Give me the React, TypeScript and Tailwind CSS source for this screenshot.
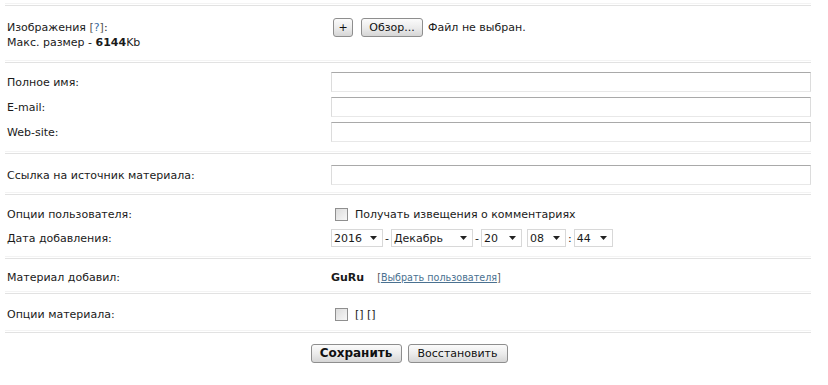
import type { ReactNode } from "react";

const font = { fontFamily: '"DejaVu Sans", Verdana, sans-serif' };

function Line() {
  return (
    <div className="mx-[5px] w-[806px] h-[3px] border-t border-t-[#f3f3f3] border-b border-b-[#e2e2e2]" />
  );
}

function Row({ label, children }: { label: ReactNode; children?: ReactNode }) {
  return (
    <div className="flex items-center h-[20px]">
      <div className="w-[326px] pl-[2px]">{label}</div>
      <div className="flex-1 flex items-center">{children}</div>
    </div>
  );
}

function TextInput() {
  return (
    <div className="w-[480px] h-[20px] bg-white border border-[#dcdcdc] border-t-[#a9a9a9] border-b-[#e8e8e8]" />
  );
}

function Btn({ children, bold, w }: { children: ReactNode; bold?: boolean; w: string }) {
  return (
    <div
      className={`${w} h-[19px] flex items-center justify-center rounded-[3px] border border-[#8e8e8e] bg-gradient-to-b from-[#fbfbfb] via-[#ececec] to-[#d6d6d6] text-[#111] ${bold ? "font-bold text-[12px]" : "text-[11px]"}`}
    >
      {children}
    </div>
  );
}

function Select({ value, w }: { value: string; w: string }) {
  return (
    <div className={`${w} h-[18px] flex items-center justify-between bg-white border border-[#d8d8d8] pl-[2px] pr-[5px]`}>
      <span>{value}</span>
      <svg width="7" height="4" viewBox="0 0 7 4">
        <path d="M0 0h7L3.5 4z" fill="#222" />
      </svg>
    </div>
  );
}

function Check() {
  return (
    <div className="ml-[4px] w-[13px] h-[13px] border border-[#8f8f8f] bg-gradient-to-br from-[#dcdcdc] to-[#f7f7f7]" />
  );
}

export default function App() {
  return (
    <div className="w-[828px] h-[385px] bg-white text-[11px] leading-[15px] text-[#1a1a1a]" style={font}>
      <div className="h-[3px]" />
      <Line />

      <div className="flex pt-[12px] h-[54px]">
        <div className="w-[331px] pl-[7px] pt-[2px]">
          <div>
            Изображения <span className="text-[#555]">[</span>
            <span className="text-[#3a6ea5]">?</span>
            <span className="text-[#555]">]</span>:
          </div>
          <div>
            Макс. размер - <b>6144</b>Kb
          </div>
        </div>
        <div className="flex items-start gap-[8px] pl-[2px]">
          <Btn w="w-[20px]">+</Btn>
          <Btn w="w-[62px]">Обзор...</Btn>
          <span className="leading-[19px] -ml-[3px]">Файл не выбран.</span>
        </div>
      </div>

      <Line />
      <div className="pl-[5px] pt-[9px] pb-[9px] flex flex-col gap-[5px]">
        <Row label="Полное имя:">
          <TextInput />
        </Row>
        <Row label="E-mail:">
          <TextInput />
        </Row>
        <Row label="Web-site:">
          <TextInput />
        </Row>
      </div>

      <Line />
      <div className="pl-[5px] pt-[11px] pb-[7px]">
        <Row label="Ссылка на источник материала:">
          <TextInput />
        </Row>
      </div>

      <Line />
      <div className="pl-[5px] pt-[9px] pb-[8px] flex flex-col gap-[4px]">
        <Row label="Опции пользователя:">
          <Check />
          <span className="ml-[7px]">Получать извещения о комментариях</span>
        </Row>
        <Row label="Дата добавления:">
          <Select value="2016" w="w-[52px]" />
          <span className="px-[2px]">-</span>
          <Select value="Декабрь" w="w-[82px]" />
          <span className="px-[2px]">-</span>
          <Select value="20" w="w-[41px]" />
          <span className="w-[5px]" />
          <Select value="08" w="w-[39px]" />
          <span className="px-[2px]">:</span>
          <Select value="44" w="w-[39px]" />
        </Row>
      </div>

      <Line />
      <div className="pl-[5px] pt-[8px] pb-[4px]">
        <Row label="Материал добавил:">
          <b className="text-[11px]">GuRu</b>
          <span className="ml-[13px] text-[9.6px] text-[#555]">
            [<span className="underline text-[#4a7190]">Выбрать пользователя</span>]
          </span>
        </Row>
      </div>

      <Line />
      <div className="pl-[5px] pt-[10px] pb-[6px]">
        <Row label="Опции материала:">
          <Check />
          <span className="ml-[7px]">[] []</span>
        </Row>
      </div>

      <Line />
      <div className="flex justify-center gap-[6px] pt-[11px] pr-[10px]">
        <Btn w="w-[91px]" bold>
          Сохранить
        </Btn>
        <Btn w="w-[100px]">Восстановить</Btn>
      </div>
    </div>
  );
}
